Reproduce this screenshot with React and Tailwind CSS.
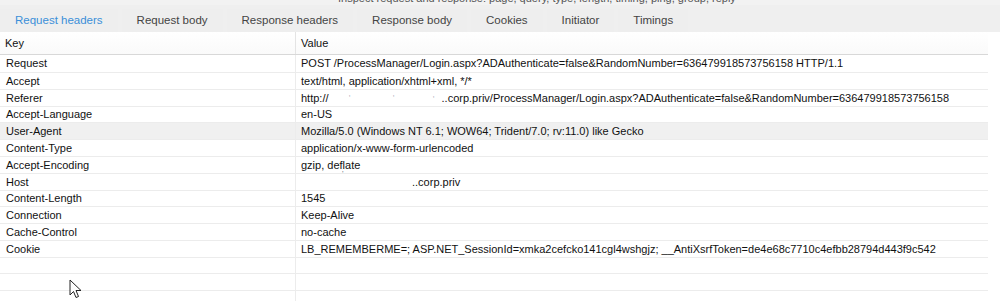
import React from "react";

const tabs = [
  "Request headers",
  "Request body",
  "Response headers",
  "Response body",
  "Cookies",
  "Initiator",
  "Timings",
];

const rows = [
  ["Request", "POST /ProcessManager/Login.aspx?ADAuthenticate=false&RandomNumber=636479918573756158 HTTP/1.1"],
  ["Accept", "text/html, application/xhtml+xml, */*"],
  ["Referer", "referer"],
  ["Accept-Language", "en-US"],
  ["User-Agent", "Mozilla/5.0 (Windows NT 6.1; WOW64; Trident/7.0; rv:11.0) like Gecko"],
  ["Content-Type", "application/x-www-form-urlencoded"],
  ["Accept-Encoding", "gzip, deflate"],
  ["Host", "host"],
  ["Content-Length", "1545"],
  ["Connection", "Keep-Alive"],
  ["Cache-Control", "no-cache"],
  ["Cookie", "LB_REMEMBERME=; ASP.NET_SessionId=xmka2cefcko141cgl4wshgjz; __AntiXsrfToken=de4e68c7710c4efbb28794d443f9c542"],
  ["", ""],
  ["", ""],
  ["", ""],
];

// row heights so separators land on the reference's 16.67px rhythm
const heights = [18, 17, 17, 16, 17, 17, 17, 17, 16, 17, 17, 17, 16, 17, 17];

const Value = ({ v }) => {
  if (v === "referer")
    return (
      <span className="flex">
        <span>http://</span>
        <span className="w-[113px] relative">
          <span className="absolute left-[20px] top-[-2px] text-[8px] text-gray-400">,</span>
          <span className="absolute left-[64px] top-[-2px] text-[8px] text-gray-400">,</span>
          <span className="absolute left-[104px] top-[-1px] text-[8px] text-gray-400">,</span>
        </span>
        <span>..corp.priv/ProcessManager/Login.aspx?ADAuthenticate=false&amp;RandomNumber=636479918573756158</span>
      </span>
    );
  if (v === "host")
    return (
      <span className="flex">
        <span className="w-[111px] relative">
          <span className="absolute left-[41px] top-[-6px] text-[8px] text-gray-500">'</span>
        </span>
        <span>..corp.priv</span>
      </span>
    );
  return <span>{v}</span>;
};

const Cursor = () => (
  <svg
    className="absolute left-[69px] top-[279px]"
    width="14"
    height="20"
    viewBox="0 0 14 20"
  >
    <path
      d="M1 1 L1 16 L4.5 12.5 L7 18.5 L9.5 17.5 L7 11.5 L12 11.5 Z"
      fill="#ffffff"
      stroke="#222222"
      strokeWidth="1"
      strokeLinejoin="round"
    />
  </svg>
);

export default function App() {
  return (
    <div
      className="relative w-[1000px] h-[301px] overflow-hidden bg-white text-[11px] text-[#111]"
      style={{ fontFamily: '"Liberation Sans", Arial, sans-serif' }}
    >
      {/* strip of the dialog above, cut off */}
      <div className="h-[5px] bg-[#f2f2f2] overflow-hidden">
        <div className="mt-[-10px] pl-[338px] text-[#555] whitespace-nowrap">
          Inspect request and response: page, query, type, length, timing, ping, group, reply
        </div>
      </div>

      {/* tab bar */}
      <div className="h-[27px] bg-[#efefef] flex pt-[4px] text-[11.5px]">
        {tabs.map((t, i) => (
          <div
            key={t}
            className={
              "h-full flex items-center px-[15px] mr-[4px] bg-[#eeeeee] " +
              (i === 0 ? "text-[#3b8fd9]" : "text-[#444]")
            }
          >
            {t}
          </div>
        ))}
      </div>

      {/* table */}
      <div className="w-[988px]">
        <div className="h-[23px] flex bg-gradient-to-b from-white to-[#fafafa] border-b border-[#d8d8d8]">
          <div className="w-[296px] shrink-0 pl-[5px] flex items-center border-r border-[#e4e4e4]">Key</div>
          <div className="flex-1 pl-[5px] flex items-center">Value</div>
        </div>
        {rows.map(([k, v], i) => (
          <div
            key={i}
            style={{ height: heights[i] }}
            className={
              "flex border-b border-[#ececec] whitespace-nowrap " +
              (k === "User-Agent" ? "bg-[#f0f0f0]" : "")
            }
          >
            <div className="w-[296px] shrink-0 pl-[6px] flex items-center border-r border-[#ececec]">{k}</div>
            <div className="flex-1 min-w-0 pl-[5px] flex items-center">
              <Value v={v} />
            </div>
          </div>
        ))}
      </div>

      <Cursor />
    </div>
  );
}
